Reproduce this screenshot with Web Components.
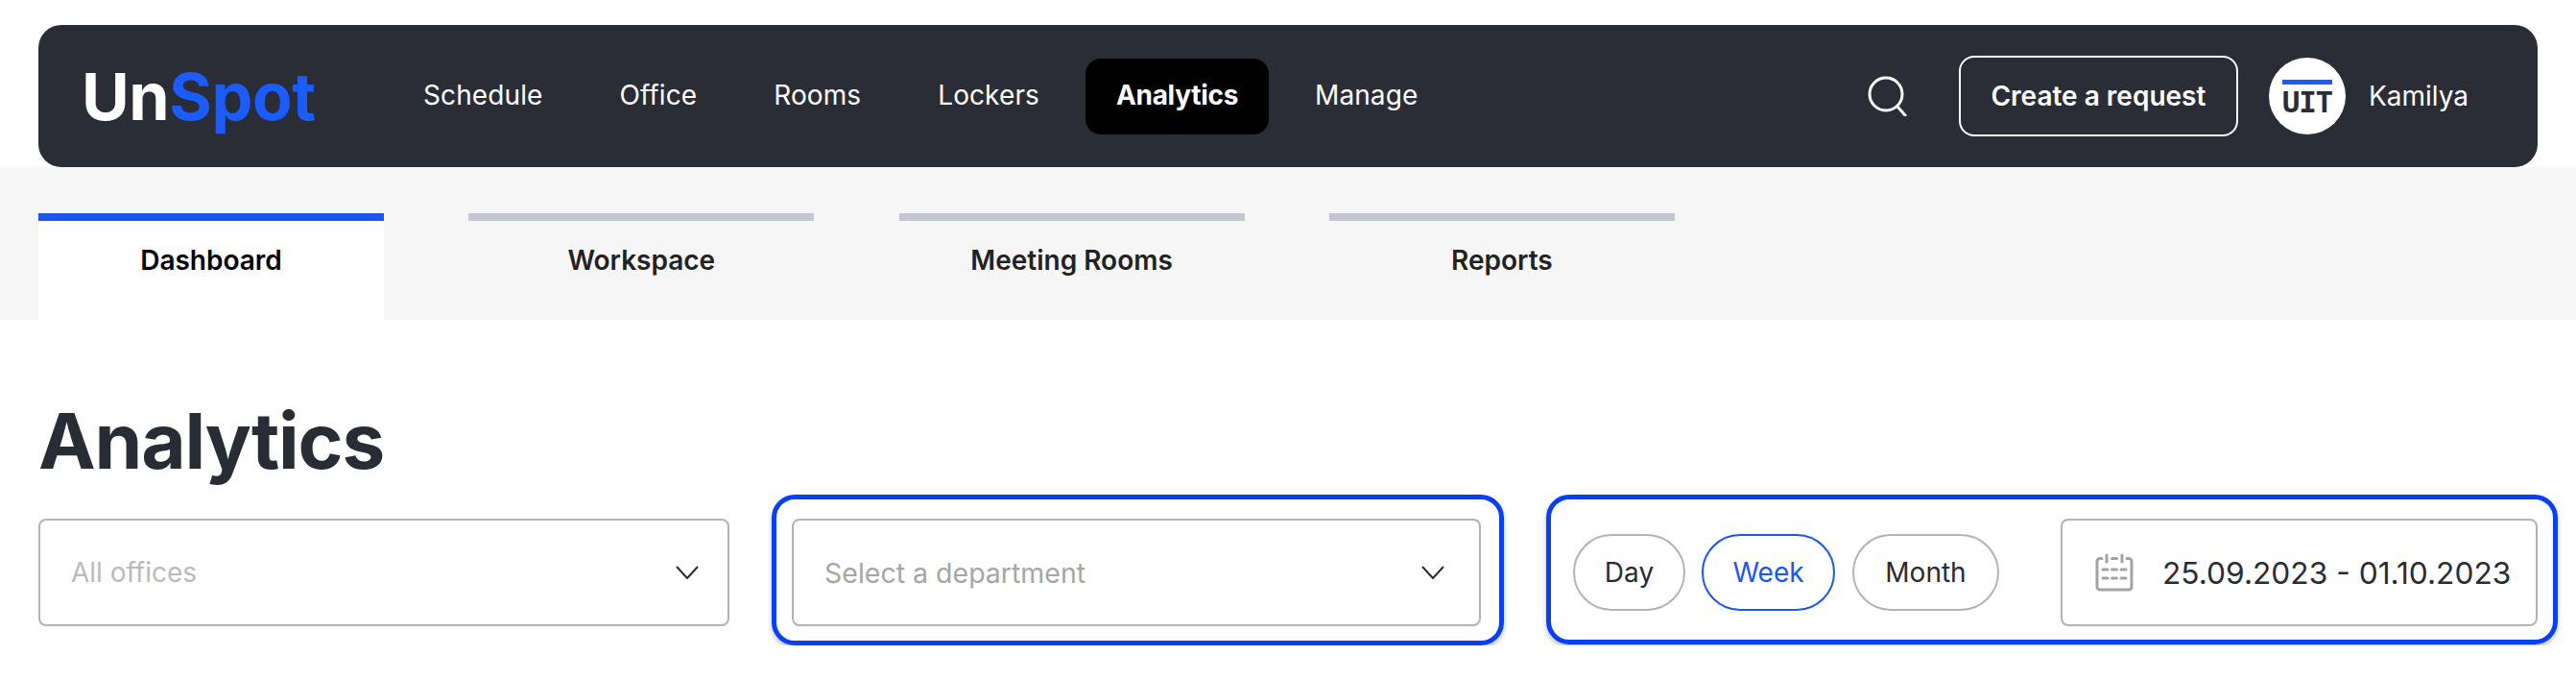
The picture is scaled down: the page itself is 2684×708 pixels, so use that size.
<!DOCTYPE html>
<html lang="en">
<head>
<meta charset="utf-8">
<title>UnSpot Analytics</title>
<style>
  html, body { margin: 0; background: #fff; }
  body { font-family: Inter, "Liberation Sans", sans-serif; color: #282c34; }
</style>
</head>
<body>
<app-header>
  <nav-link>Schedule</nav-link>
  <nav-link>Office</nav-link>
  <nav-link>Rooms</nav-link>
  <nav-link>Lockers</nav-link>
  <nav-link active>Analytics</nav-link>
  <nav-link>Manage</nav-link>
</app-header>
<tab-bar>
  <tab-item active>Dashboard</tab-item>
  <tab-item>Workspace</tab-item>
  <tab-item>Meeting Rooms</tab-item>
  <tab-item>Reports</tab-item>
</tab-bar>
<analytics-panel>
  <select-box style="width:720px">All offices</select-box>
  <focus-frame style="width:763px;padding:20px 19px 15px 16px">
    <select-box style="width:718px;color:#a6a6a6;font-size:28.500px;padding-right:36px">Select a department</select-box>
  </focus-frame>
  <focus-frame style="width:1054px;padding:20px 16px 14px 23px">
    <range-pill style="width:117px">Day</range-pill>
    <range-pill style="width:139px;margin-left:17px" active>Week</range-pill>
    <range-pill style="width:153px;margin-left:18px">Month</range-pill>
    <date-box>25.09.2023 - 01.10.2023</date-box>
  </focus-frame>
</analytics-panel>

<script>
class AppHeader extends HTMLElement {
  constructor() {
    super();
    const shadow = this.attachShadow({ mode: 'open' });
    shadow.innerHTML = `
    <style>
      :host {
        display: block;
        padding: 26px 40px 0;
        background: linear-gradient(#fff 174px, #f6f6f6 174px);
      }
      header {
        display: flex;
        align-items: center;
        height: 148px;
        padding: 0 72px 0 45px;
        background: #2a2d35;
        border-radius: 24px;
        color: #fff;
      }
      .logo {
        width: 324px;
        font: 700 68px/1 Inter, sans-serif;
        letter-spacing: -0.400px;
        white-space: nowrap;
      }
      .logo span { color: #1a5cff; }
      nav { display: flex; gap: 16px; }
      .right { display: flex; align-items: center; margin-left: auto; }
      .search { display: block; width: 42px; height: 42px; margin-right: 53px; }
      button {
        width: 291px;
        height: 84px;
        box-sizing: border-box;
        background: none;
        border: 2px solid #fff;
        border-radius: 16px;
        color: #fff;
        font: 600 28px Inter, sans-serif;
        cursor: pointer;
      }
      .avatar {
        box-sizing: border-box;
        width: 80px;
        height: 80px;
        margin: 0 24px 0 32px;
        padding-top: 23px;
        background: #fff;
        border-radius: 50%;
        text-align: center;
      }
      .avatar i { display: block; height: 5px; margin: 0 14px; background: #1a5cff; }
      .avatar b {
        display: block;
        margin-top: 3px;
        font: 700 31px/30px "DejaVu Sans Mono", monospace;
        letter-spacing: -1.300px;
        color: #2a2d35;
      }
      .name { font-size: 28px; }
    </style>
    <header>
      <div class="logo">Un<span>Spot</span></div>
      <nav><slot></slot></nav>
      <div class="right">
        <svg class="search" viewBox="0 0 42 42" fill="none" stroke="#fff" stroke-width="3" stroke-linecap="round">
          <circle cx="19" cy="19" r="17"/>
          <path d="M31 32l8 9"/>
        </svg>
        <button>Create a request</button>
        <div class="avatar"><i></i><b>UIT</b></div>
        <span class="name">Kamilya</span>
      </div>
    </header>
    `;
  }
}

class NavLink extends HTMLElement {
  constructor() {
    super();
    const shadow = this.attachShadow({ mode: 'open' });
    shadow.innerHTML = `
    <style>
      :host {
        display: flex;
        align-items: center;
        height: 79px;
        padding: 0 32px 2px;
        box-sizing: border-box;
        border-radius: 16px;
        font-size: 28px;
        letter-spacing: 0.100px;
        color: #fff;
        cursor: pointer;
      }
      :host([active]) { background: #000; font-weight: 700; letter-spacing: -0.300px; }
    </style>
    <slot></slot>
    `;
  }
}

class TabBar extends HTMLElement {
  constructor() {
    super();
    const shadow = this.attachShadow({ mode: 'open' });
    shadow.innerHTML = `
    <style>
      :host {
        display: flex;
        gap: 88.300px;
        height: 111px;
        padding: 48px 40px 0;
        background: #f6f6f6;
      }
    </style>
    <slot></slot>
    `;
  }
}

class TabItem extends HTMLElement {
  constructor() {
    super();
    const shadow = this.attachShadow({ mode: 'open' });
    shadow.innerHTML = `
    <style>
      :host {
        display: block;
        box-sizing: border-box;
        width: 360px;
        border-top: 8px solid #c4c6d0;
        padding-top: 23px;
        font-size: 28px;
        font-weight: 600;
        line-height: 36px;
        text-align: center;
        color: #222;
        cursor: pointer;
      }
      :host([active]) { border-top-color: #1a56f0; background: #fff; color: #000; }
    </style>
    <slot></slot>
    `;
  }
}

class AnalyticsPanel extends HTMLElement {
  constructor() {
    super();
    const shadow = this.attachShadow({ mode: 'open' });
    shadow.innerHTML = `
    <style>
      :host { display: block; padding: 0 19px 0 40px; }
      h1 {
        margin: 0 0 31px;
        padding-top: 76px;
        font-size: 80px;
        font-weight: 700;
        line-height: 100px;
        letter-spacing: -1.200px;
        color: #282c34;
      }
      .row { display: flex; align-items: flex-start; gap: 44px; }
    </style>
    <h1>Analytics</h1>
    <div class="row"><slot></slot></div>
    `;
  }
}

class FocusFrame extends HTMLElement {
  constructor() {
    super();
    const shadow = this.attachShadow({ mode: 'open' });
    shadow.innerHTML = `
    <style>
      :host {
        display: flex;
        align-items: center;
        box-sizing: border-box;
        margin-top: -25px;
        border: 5px solid #0a40f5;
        border-radius: 24px;
        box-shadow: 0 3px 5px rgba(0, 0, 0, 0.25);
      }
    </style>
    <slot></slot>
    `;
  }
}

class SelectBox extends HTMLElement {
  constructor() {
    super();
    const shadow = this.attachShadow({ mode: 'open' });
    shadow.innerHTML = `
    <style>
      :host {
        display: flex;
        align-items: center;
        justify-content: space-between;
        box-sizing: border-box;
        height: 112px;
        padding: 0 30px 0 32px;
        border: 2px solid #b3b3b3;
        border-radius: 8px;
        font-size: 28px;
        color: #bababa;
      }
      svg { width: 24px; height: 14px; }
    </style>
    <span><slot></slot></span>
    <svg viewBox="0 0 24 14" fill="none" stroke="#282c34" stroke-width="2">
      <path d="M1 1l11 12L23 1"/>
    </svg>
    `;
  }
}

class RangePill extends HTMLElement {
  constructor() {
    super();
    const shadow = this.attachShadow({ mode: 'open' });
    shadow.innerHTML = `
    <style>
      :host {
        display: flex;
        align-items: center;
        justify-content: center;
        flex: none;
        box-sizing: border-box;
        height: 80px;
        border: 2px solid #b3b3b3;
        border-radius: 40px;
        font-size: 28px;
        color: #282c34;
        cursor: pointer;
      }
      :host([active]) { border-color: #1a56f0; color: #1a56f0; }
    </style>
    <slot></slot>
    `;
  }
}

class DateBox extends HTMLElement {
  constructor() {
    super();
    const shadow = this.attachShadow({ mode: 'open' });
    shadow.innerHTML = `
    <style>
      :host {
        display: flex;
        align-items: center;
        box-sizing: border-box;
        width: 497px;
        height: 112px;
        margin-left: auto;
        padding-left: 34px;
        border: 2px solid #b3b3b3;
        border-radius: 8px;
        font-size: 31.700px;
        white-space: nowrap;
        color: #282c34;
      }
      svg { width: 40px; height: 40px; margin-right: 30px; flex: none; }
    </style>
    <svg viewBox="0 0 40 40" fill="none" stroke="#a3a3a3" stroke-width="3" stroke-linecap="round">
      <path d="M7 5.500H5a3 3 0 0 0-3 3V35a3 3 0 0 0 3 3h30a3 3 0 0 0 3-3V8.500a3 3 0 0 0-3-3h-2"/>
      <path d="M12 2v7M28 2v7M17.500 5.500h5"/>
      <path d="M8 17h5M17.500 17h5M27 17h5M8 26h5M17.500 26h5M27 26h5"/>
    </svg>
    <slot></slot>
    `;
  }
}

customElements.define('app-header', AppHeader);
customElements.define('nav-link', NavLink);
customElements.define('tab-bar', TabBar);
customElements.define('tab-item', TabItem);
customElements.define('analytics-panel', AnalyticsPanel);
customElements.define('focus-frame', FocusFrame);
customElements.define('select-box', SelectBox);
customElements.define('range-pill', RangePill);
customElements.define('date-box', DateBox);
</script>
</body>
</html>
